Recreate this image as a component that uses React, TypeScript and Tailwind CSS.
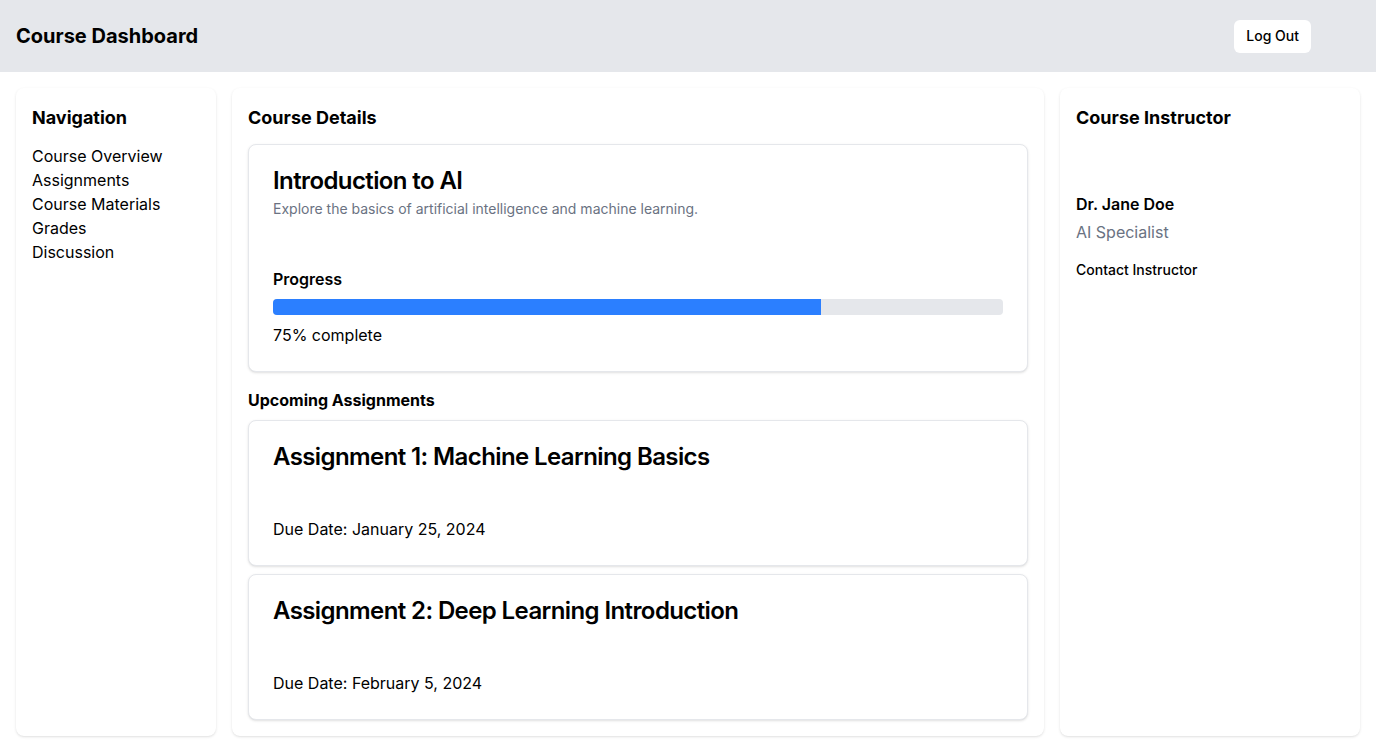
const navItems = ["Course Overview", "Assignments", "Course Materials", "Grades", "Discussion"];

const assignments = [
  { title: "Assignment 1: Machine Learning Basics", due: "January 25, 2024" },
  { title: "Assignment 2: Deep Learning Introduction", due: "February 5, 2024" },
];

export default function App() {
  return (
    <div className="min-h-screen bg-white text-black font-['Inter',sans-serif]">
      <header className="flex h-[72px] items-center justify-between bg-gray-200 px-4">
        <h1 className="text-xl font-bold">Course Dashboard</h1>
        <div className="flex items-center gap-4">
          <button className="h-[33px] rounded-md bg-white px-3 text-sm font-medium">Log Out</button>
          <span className="h-8 w-[33px]" />
        </div>
      </header>

      <main className="grid h-[680px] grid-cols-[200px_1fr_300px] gap-4 p-4">
        <aside className="rounded-lg bg-white p-4 shadow-sm">
          <h2 className="mb-3 text-lg font-bold">Navigation</h2>
          <nav className="flex flex-col">
            {navItems.map((item) => (
              <a key={item} href="#" className="text-base leading-6">
                {item}
              </a>
            ))}
          </nav>
        </aside>

        <section className="rounded-lg bg-white p-4 shadow-sm">
          <h2 className="mb-3 text-lg font-bold">Course Details</h2>
          <div className="rounded-lg border border-gray-200 bg-white shadow-sm">
            <div className="p-6">
              <h3 className="text-2xl font-semibold leading-none tracking-tight">Introduction to AI</h3>
              <p className="mt-1.5 text-sm text-gray-500">
                Explore the basics of artificial intelligence and machine learning.
              </p>
            </div>
            <div className="px-6 pt-6 pb-6">
              <h4 className="text-base font-semibold">Progress</h4>
              <div className="mt-2 h-4 w-full overflow-hidden rounded bg-gray-200">
                <div className="h-full bg-blue-500" style={{ width: "75%" }} />
              </div>
              <p className="mt-2 text-base">75% complete</p>
            </div>
          </div>

          <h3 className="mt-4 mb-2 text-base font-bold">Upcoming Assignments</h3>
          <div className="flex flex-col gap-2">
            {assignments.map((a) => (
              <div key={a.title} className="rounded-lg border border-gray-200 bg-white shadow-sm">
                <div className="p-6">
                  <h4 className="text-2xl font-semibold leading-none tracking-tight">{a.title}</h4>
                </div>
                <div className="px-6 pt-6 pb-6">
                  <p className="text-base">Due Date: {a.due}</p>
                </div>
              </div>
            ))}
          </div>
        </section>

        <aside className="rounded-lg bg-white p-4 shadow-sm">
          <h2 className="text-lg font-bold">Course Instructor</h2>
          <div className="mt-[60px]">
            <p className="text-base font-semibold">Dr. Jane Doe</p>
            <p className="mt-1 text-base text-gray-500">AI Specialist</p>
            <button className="mt-4 text-sm font-medium">Contact Instructor</button>
          </div>
        </aside>
      </main>
    </div>
  );
}
